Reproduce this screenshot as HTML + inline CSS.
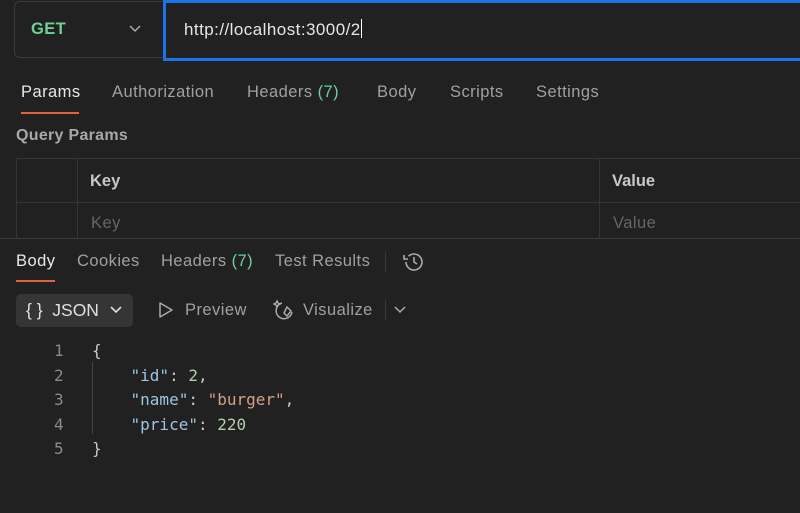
<!DOCTYPE html>
<html><head><meta charset="utf-8"><style>
*{margin:0;padding:0;box-sizing:border-box}
body{width:800px;height:513px;background:#212121;font-family:"Liberation Sans",sans-serif;color:#c8c8c8;position:relative;overflow:hidden}
.a{position:absolute;white-space:nowrap}
.t{font-size:16.5px;letter-spacing:0.45px}
.mono{font-family:"DejaVu Sans Mono","Liberation Mono",monospace}
</style></head><body>
<div class="a" style="left:14px;top:1px;width:152px;height:57px;border:1px solid #3a3a3a;border-right:none;border-radius:6px 0 0 6px"></div>
<div class="a" style="left:31px;top:20px;font-size:16.5px;font-weight:bold;color:#6fcf97;letter-spacing:0.4px">GET</div>
<svg class="a" style="left:128px;top:24px" width="14" height="10"><path d="M2 2l5 5 5-5" stroke="#aaa" stroke-width="1.5" fill="none"/></svg>
<div class="a" style="left:163px;top:0;width:660px;height:61px;border:3px solid #1a73e8;background:#212121"></div>
<div class="a" style="left:184px;top:19px;font-size:17px;color:#e6e6e6;letter-spacing:0.45px">http://localhost:3000/2<span style="display:inline-block;width:1px;height:19px;background:#fff;vertical-align:-3px"></span></div>

<div class="a t" style="left:21px;top:83px;color:#e8e8e8">Params</div>
<div class="a" style="left:21px;top:112px;width:58px;height:2px;background:#e2633b"></div>
<div class="a t" style="left:112px;top:83px;color:#a0a0a0">Authorization</div>
<div class="a t" style="left:247px;top:83px;color:#a0a0a0">Headers <span style="color:#6fcf97">(7)</span></div>
<div class="a t" style="left:377px;top:83px;color:#a0a0a0">Body</div>
<div class="a t" style="left:450px;top:83px;color:#a0a0a0">Scripts</div>
<div class="a t" style="left:536px;top:83px;color:#a0a0a0">Settings</div>
<div class="a" style="left:16px;top:127px;font-size:16px;font-weight:bold;color:#a8a8a8;letter-spacing:0.3px">Query Params</div>

<div class="a" style="left:16px;top:158px;width:800px;height:1px;background:#353535"></div>
<div class="a" style="left:16px;top:202px;width:800px;height:1px;background:#353535"></div>
<div class="a" style="left:16px;top:158px;width:1px;height:80px;background:#353535"></div>
<div class="a" style="left:77px;top:158px;width:1px;height:80px;background:#353535"></div>
<div class="a" style="left:599px;top:158px;width:1px;height:80px;background:#353535"></div>
<div class="a" style="left:90px;top:172px;font-size:16.5px;font-weight:bold;color:#c8c8c8">Key</div>
<div class="a" style="left:612px;top:172px;font-size:16.5px;font-weight:bold;color:#c8c8c8">Value</div>
<div class="a t" style="left:91px;top:214px;color:#666">Key</div>
<div class="a t" style="left:613px;top:214px;color:#666">Value</div>
<div class="a" style="left:0;top:238px;width:800px;height:1px;background:#3a3a3a"></div>

<div class="a t" style="left:16px;top:252px;color:#e8e8e8">Body</div>
<div class="a" style="left:16px;top:280px;width:39px;height:2px;background:#e2633b"></div>
<div class="a t" style="left:77px;top:252px;color:#a0a0a0">Cookies</div>
<div class="a t" style="left:161px;top:252px;color:#a0a0a0">Headers <span style="color:#6fcf97">(7)</span></div>
<div class="a t" style="left:275px;top:252px;color:#a0a0a0">Test Results</div>
<div class="a" style="left:385px;top:252px;width:1px;height:20px;background:#3a3a3a"></div>
<svg class="a" style="left:401px;top:249px" width="26" height="26" viewBox="0 0 26 26" fill="none" stroke="#aaa" stroke-width="1.6"><path d="M5 13a8 8 0 1 0 2.5-5.8"/><path d="M3 6v4h4"/><path d="M13 8v5l3 2"/></svg>

<div class="a" style="left:16px;top:294px;width:117px;height:33px;background:#353535;border-radius:5px"></div>
<div class="a" style="left:26px;top:300px;font-size:17.5px;color:#e0e0e0">{ } &nbsp;JSON</div>
<svg class="a" style="left:109px;top:305px" width="14" height="10"><path d="M2 2l5 5 5-5" stroke="#ddd" stroke-width="1.6" fill="none"/></svg>
<svg class="a" style="left:157px;top:301px" width="18" height="18"><path d="M3 2l12 7-12 7z" stroke="#aaa" stroke-width="1.5" fill="none" stroke-linejoin="round"/></svg>
<div class="a t" style="left:185px;top:301px;color:#a0a0a0">Preview</div>
<svg class="a" style="left:273px;top:298px" width="24" height="24" viewBox="0 0 24 24" fill="none" stroke="#aaa" stroke-width="1.5"><path d="M9 5a8 8 0 1 0 10 9"/><path d="M14 9l4 4-4 5-3-3z"/><path d="M4 3l1 2 2 1-2 1-1 2-1-2-2-1 2-1z"/></svg>
<div class="a t" style="left:303px;top:301px;color:#a0a0a0">Visualize</div>
<div class="a" style="left:385px;top:300px;width:1px;height:20px;background:#3a3a3a"></div>
<svg class="a" style="left:393px;top:305px" width="14" height="10"><path d="M2 2l5 5 5-5" stroke="#aaa" stroke-width="1.5" fill="none"/></svg>

<div class="a mono" style="left:54px;top:339px;font-size:16px;line-height:24.5px;color:#8a8a8a;text-align:right">1<br>2<br>3<br>4<br>5</div>
<div class="a" style="left:92px;top:362px;width:1px;height:72px;background:#444"></div>
<div class="a mono" style="left:92px;top:339px;font-size:16px;line-height:24.5px;color:#c8c8c8">{<br>&nbsp;&nbsp;&nbsp;&nbsp;<span style="color:#9cc6e0">"id"</span>: <span style="color:#b5cea8">2</span>,<br>&nbsp;&nbsp;&nbsp;&nbsp;<span style="color:#9cc6e0">"name"</span>: <span style="color:#d6a088">"burger"</span>,<br>&nbsp;&nbsp;&nbsp;&nbsp;<span style="color:#9cc6e0">"price"</span>: <span style="color:#b5cea8">220</span><br>}</div>
</body></html>
